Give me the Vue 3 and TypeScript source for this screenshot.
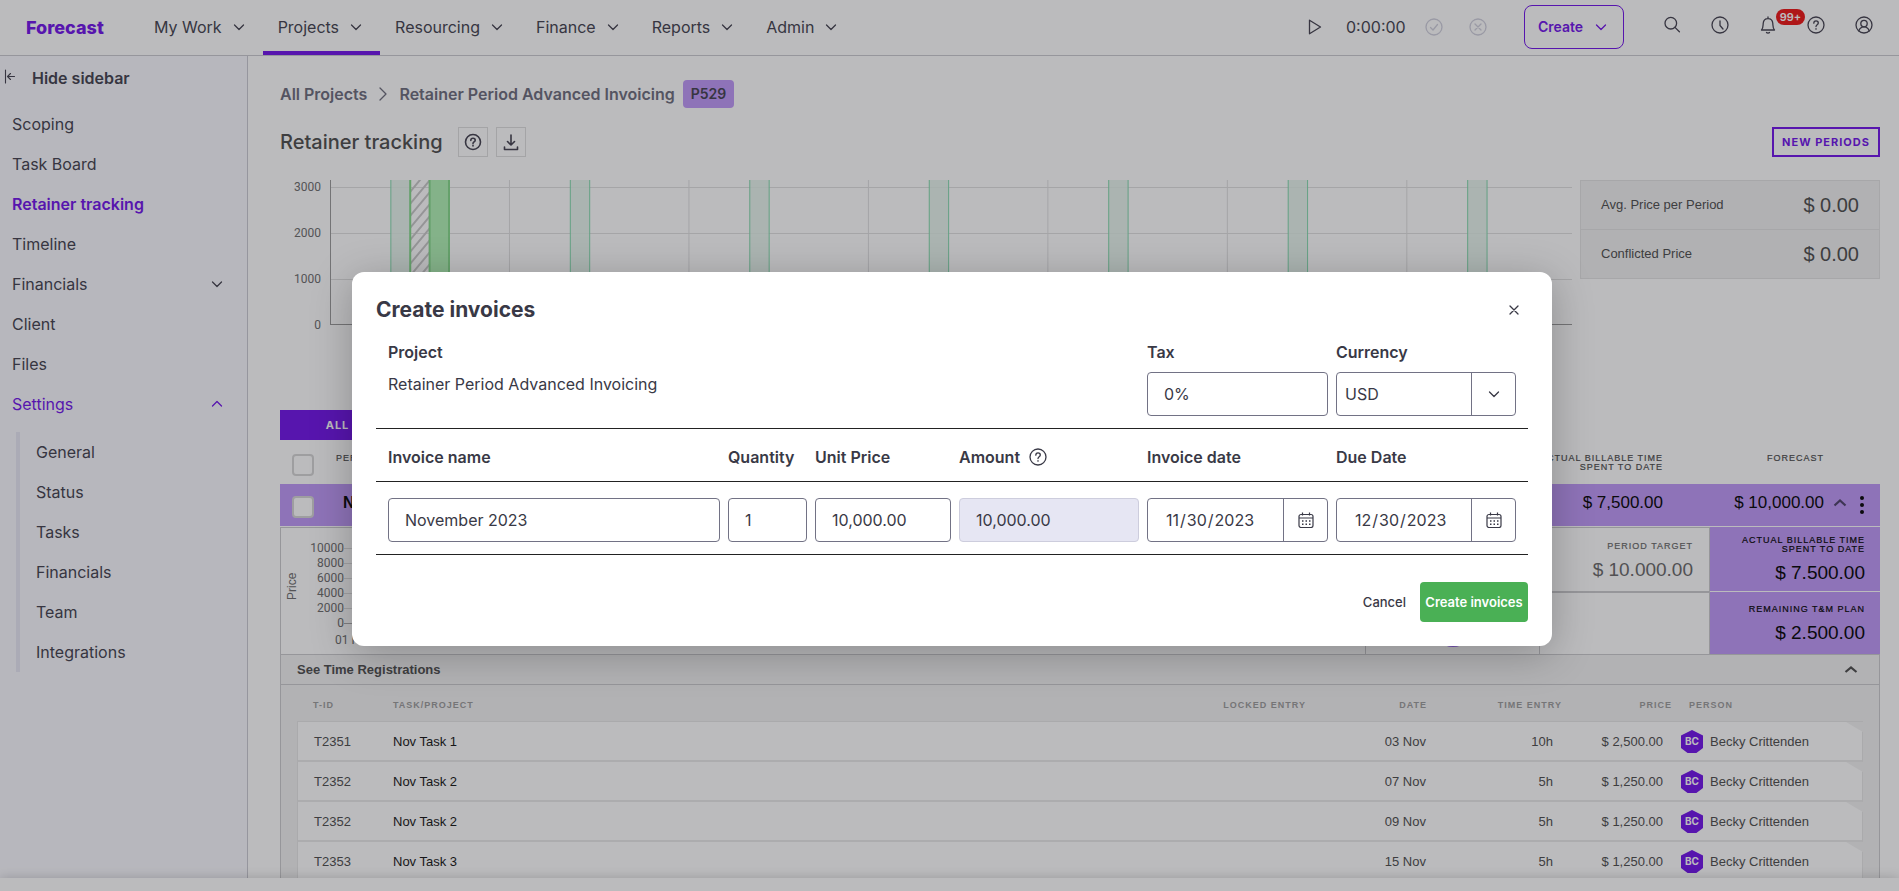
<script setup lang="ts">
import { ref } from 'vue'

interface SideItem {
  label: string
  active?: boolean
  chevron?: 'up' | 'down'
  open?: boolean
}
interface TimeEntry {
  id: string
  task: string
  date: string
  time: string
  price: string
}

const menu: string[] = ['My Work', 'Projects', 'Resourcing', 'Finance', 'Reports', 'Admin']
const sideItems: SideItem[] = [
  { label: 'Scoping' },
  { label: 'Task Board' },
  { label: 'Retainer tracking', active: true },
  { label: 'Timeline' },
  { label: 'Financials', chevron: 'down' },
  { label: 'Client' },
  { label: 'Files' },
  { label: 'Settings', chevron: 'up', open: true },
]
const subItems: string[] = ['General', 'Status', 'Tasks', 'Financials', 'Team', 'Integrations']

const chartTicks: number[] = [3000, 2000, 1000, 0]
const periodPct = 14.45
const barPct = 1.56
const periods: number[] = [0, 1, 2, 3, 4, 5, 6]
const barX = (n: number): number => 4.9 + n * periodPct
const miniTicks: number[] = [10000, 8000, 6000, 4000, 2000, 0]

const entries: TimeEntry[] = [
  { id: 'T2351', task: 'Nov Task 1', date: '03 Nov', time: '10h', price: '$ 2,500.00' },
  { id: 'T2352', task: 'Nov Task 2', date: '07 Nov', time: '5h', price: '$ 1,250.00' },
  { id: 'T2352', task: 'Nov Task 2', date: '09 Nov', time: '5h', price: '$ 1,250.00' },
  { id: 'T2353', task: 'Nov Task 3', date: '15 Nov', time: '5h', price: '$ 1,250.00' },
]

const tax = ref('0%')
const currency = ref('USD')
const invoiceName = ref('November 2023')
const quantity = ref('1')
const unitPrice = ref('10,000.00')
const amount = ref('10,000.00')
const invoiceDate = ref('2023-11-30')
const dueDate = ref('2023-12-30')
</script>

<template>
  <div class="app">
    <header class="nav">
      <a href="#" class="logo">Forecast</a>
      <nav class="menu">
        <button v-for="m in menu" :key="m" type="button" class="menu-item" :class="{ current: m === 'Projects' }">
          {{ m }}
          <svg width="18" height="18" viewBox="0 0 18 18" class="line"><path d="M4.5 7 9 11.5 13.5 7" /></svg>
        </button>
      </nav>
      <div class="timer">
        <button type="button" class="icon-btn" aria-label="Start timer">
          <svg width="18" height="18" viewBox="0 0 18 18" class="line"><path d="M3.5 2.2V15.8L14.5 9Z" /></svg>
        </button>
        <span class="time">0:00:00</span>
        <button type="button" class="icon-btn faint" aria-label="Confirm">
          <svg width="18" height="18" viewBox="0 0 18 18" class="line"><circle cx="9" cy="9" r="8" /><path d="M5.5 9.5 8 12 12.5 6.5" /></svg>
        </button>
        <button type="button" class="icon-btn faint discard" aria-label="Discard">
          <svg width="18" height="18" viewBox="0 0 18 18" class="line"><circle cx="9" cy="9" r="8" /><path d="M6 6 12 12M12 6 6 12" /></svg>
        </button>
      </div>
      <button type="button" class="create">
        Create
        <svg width="16" height="16" viewBox="0 0 16 16" class="line"><path d="M3.5 6 8 10.5 12.5 6" /></svg>
      </button>
      <div class="tools">
        <button type="button" class="icon-btn" aria-label="Search">
          <svg width="18" height="18" viewBox="0 0 18 18" class="line"><circle cx="7.8" cy="7.2" r="5.8" /><path d="M12 11.4 16.4 15.8" /></svg>
        </button>
        <button type="button" class="icon-btn" aria-label="Time">
          <svg width="18" height="18" viewBox="0 0 18 18" class="line"><circle cx="9" cy="9" r="8" /><path d="M9 5V9.5L12 13" /></svg>
        </button>
        <button type="button" class="icon-btn bell" aria-label="Notifications">
          <svg width="18" height="18" viewBox="0 0 18 18" class="line"><path d="M2.5 14H15.5C13.8 12.4 14 10.5 13.8 7.5C13.6 4.3 11.8 2.6 9 2.6S4.4 4.3 4.2 7.5C4 10.5 4.2 12.4 2.5 14ZM9 2.6V1M7.5 16.5C8.2 17.3 9.8 17.3 10.5 16.5" /></svg>
          <span class="badge">99+</span>
        </button>
        <button type="button" class="icon-btn" aria-label="Help">
          <svg width="18" height="18" viewBox="0 0 18 18" class="line"><circle cx="9" cy="9" r="8" /><path d="M6.8 7.2C6.8 4 11.3 4.2 11.3 7C11.3 8.8 9 8.8 9 10.6M9 12.6V13.2" /></svg>
        </button>
        <button type="button" class="icon-btn" aria-label="Account">
          <svg width="18" height="18" viewBox="0 0 18 18" class="line"><circle cx="9" cy="9" r="8" /><circle cx="9" cy="7.6" r="3.2" /><path d="M3.8 15C4.6 12.3 6.5 10.8 9 10.8S13.4 12.3 14.2 15" /></svg>
        </button>
      </div>
    </header>

    <div class="body">
      <aside class="sidebar">
        <button type="button" class="hide">
          <svg width="16" height="18" viewBox="0 0 16 18" class="line thin"><path d="M1.5 1V14M10.500 7.500H3.500M6.500 4.500 3.500 7.500 6.500 10.500" /></svg>
          Hide sidebar
        </button>
        <ul>
          <li v-for="s in sideItems" :key="s.label">
            <a href="#" class="side-link" :class="{ active: s.active, open: s.open }">
              {{ s.label }}
              <svg v-if="s.chevron === 'down'" width="16" height="16" viewBox="0 0 16 16" class="line"><path d="M3.5 6 8 10.5 12.5 6" /></svg>
              <svg v-if="s.chevron === 'up'" width="16" height="16" viewBox="0 0 16 16" class="line"><path d="M3.5 10 8 5.5 12.5 10" /></svg>
            </a>
          </li>
        </ul>
        <ul class="sub">
          <li v-for="s in subItems" :key="s"><a href="#" class="side-link">{{ s }}</a></li>
        </ul>
      </aside>

      <main class="main">
        <div class="crumbs">
          <a href="#">All Projects</a>
          <svg width="10" height="16" viewBox="0 0 10 16" class="line"><path d="M2 2 8 8 2 14" /></svg>
          <a href="#">Retainer Period Advanced Invoicing</a>
          <span class="tag">P529</span>
        </div>

        <div class="title-row">
          <h1>Retainer tracking</h1>
          <button type="button" class="square" aria-label="Help">
            <svg width="18" height="18" viewBox="0 0 18 18" class="line bold"><circle cx="9" cy="9" r="7.5" /><path d="M6.8 7.4C6.8 4.4 11.2 4.6 11.2 7.2C11.2 8.8 9 8.9 9 10.4M9 12.2V13" /></svg>
          </button>
          <button type="button" class="square" aria-label="Download">
            <svg width="18" height="18" viewBox="0 0 18 18" class="line bold"><path d="M9 2V11.5M5.500 8.500 9 12 12.500 8.500M2.500 14V16.500H15.500V14" /></svg>
          </button>
          <button type="button" class="new-periods">NEW PERIODS</button>
        </div>

        <section class="overview">
          <div class="ticks"><span v-for="t in chartTicks" :key="t">{{ t }}</span></div>
          <svg class="plot" height="146">
            <defs>
              <pattern id="hatch" width="10" height="12" patternUnits="userSpaceOnUse">
                <path d="M-2 14.4 12 -2.4M-2 2.4 2 -2.4M8 14.4 12 9.6" stroke="#c8c8c8" stroke-width="2" />
              </pattern>
            </defs>
            <g class="grid-lines">
              <line v-for="y in [7, 53, 99]" :key="y" x1="0" x2="100%" :y1="y + 0.5" :y2="y + 0.5" />
              <line v-for="n in 6" :key="'v' + n" :x1="n * periodPct + '%'" :x2="n * periodPct + '%'" y1="0" y2="144" />
            </g>
            <g v-for="n in periods" :key="'b' + n" class="bar">
              <rect :x="barX(n) + '%'" y="0" :width="barPct + '%'" height="144" />
              <line :x1="barX(n) + '%'" :x2="barX(n) + '%'" y1="0" y2="144" />
              <line :x1="barX(n) + barPct + '%'" :x2="barX(n) + barPct + '%'" y1="0" y2="144" />
            </g>
            <rect :x="barX(0) + barPct + '%'" y="0" :width="barPct + '%'" height="144" fill="url(#hatch)" />
            <g class="bar strong">
              <rect :x="barX(0) + 2 * barPct + '%'" y="0" :width="barPct + '%'" height="144" />
              <line :x1="barX(0) + barPct + '%'" :x2="barX(0) + barPct + '%'" y1="0" y2="144" />
              <line :x1="barX(0) + 2 * barPct + '%'" :x2="barX(0) + 2 * barPct + '%'" y1="0" y2="144" />
              <line :x1="barX(0) + 3 * barPct + '%'" :x2="barX(0) + 3 * barPct + '%'" y1="0" y2="144" />
            </g>
            <g class="axis">
              <line x1="0.5" x2="0.5" y1="0" y2="145" />
              <line x1="0" x2="100%" y1="144.5" y2="144.5" />
            </g>
          </svg>
          <dl class="totals">
            <div><dt>Avg. Price per Period</dt><dd>$ 0.00</dd></div>
            <div><dt>Conflicted Price</dt><dd>$ 0.00</dd></div>
          </dl>
        </section>

        <div class="tabs"><button type="button">ALL</button></div>

        <div class="period-head">
          <input type="checkbox" class="check" aria-label="Select all periods" />
          <span class="caps p-name">PERIOD</span>
          <span class="caps p-actual">ACTUAL BILLABLE TIME SPENT TO DATE</span>
          <span class="caps p-forecast">FORECAST</span>
        </div>
        <div class="period-row">
          <input type="checkbox" class="check" aria-label="Select period" />
          <strong class="p-name">November 2023</strong>
          <span class="p-actual">$ 7,500.00</span>
          <span class="p-forecast">$ 10,000.00</span>
          <button type="button" class="icon-btn up" aria-label="Collapse period">
            <svg width="16" height="16" viewBox="0 0 16 16" class="line heavy"><path d="M2.5 10.5 8 5.5 13.5 10.5" /></svg>
          </button>
          <button type="button" class="icon-btn kebab" aria-label="Period options">
            <svg width="6" height="20" viewBox="0 0 6 20"><circle cx="3" cy="3" r="2" /><circle cx="3" cy="10" r="2" /><circle cx="3" cy="17" r="2" /></svg>
          </button>
        </div>

        <section class="detail">
          <div class="mini">
            <span class="mini-title">Price</span>
            <div class="mini-labels">
              <span v-for="t in miniTicks" :key="t">{{ t }}</span>
              <span class="mini-date">01 Nov</span>
            </div>
            <div class="mini-lines"><i v-for="t in miniTicks" :key="t"></i></div>
          </div>
          <div class="cell people">
            <svg width="40" height="40" viewBox="0 0 40 40"><circle cx="20" cy="20" r="20" /></svg>
          </div>
          <div class="stack">
            <div class="stat"><span class="caps">PERIOD TARGET</span><b>$ 10.000.00</b></div>
            <div class="stat"></div>
          </div>
          <div class="stack violet">
            <div class="stat"><span class="caps">ACTUAL BILLABLE TIME<br />SPENT TO DATE</span><b>$ 7.500.00</b></div>
            <div class="stat"><span class="caps">REMAINING T&amp;M PLAN</span><b>$ 2.500.00</b></div>
          </div>
        </section>

        <section class="registrations">
          <button type="button" class="reg-head">
            See Time Registrations
            <svg width="16" height="16" viewBox="0 0 16 16" class="line heavy"><path d="M2.5 10 8 5.5 13.5 10" /></svg>
          </button>
          <div class="reg-body">
            <table>
              <colgroup>
                <col class="c-id" /><col /><col class="c-locked" /><col class="c-date" /><col class="c-time" /><col class="c-price" /><col class="c-person" />
              </colgroup>
              <thead>
                <tr>
                  <th class="first">T-ID</th>
                  <th>TASK/PROJECT</th>
                  <th class="r">LOCKED ENTRY</th>
                  <th class="r">DATE</th>
                  <th class="r">TIME ENTRY</th>
                  <th class="r">PRICE</th>
                  <th class="person-head">PERSON</th>
                </tr>
              </thead>
              <tbody>
                <tr v-for="(e, i) in entries" :key="i">
                  <td class="first">{{ e.id }}</td>
                  <td class="task">{{ e.task }}</td>
                  <td></td>
                  <td class="r date">{{ e.date }}</td>
                  <td class="r num">{{ e.time }}</td>
                  <td class="r num">{{ e.price }}</td>
                  <td class="last">
                    <div class="person">
                      <span class="hex">BC</span>
                      Becky Crittenden
                    </div>
                  </td>
                </tr>
              </tbody>
            </table>
          </div>
        </section>
      </main>
    </div>

    <div class="bottom"></div>

    <div class="overlay">
      <form class="modal" role="dialog" aria-labelledby="dialog-title" @submit.prevent>
        <div class="modal-head">
          <h2 id="dialog-title">Create invoices</h2>
          <button type="button" class="icon-btn" aria-label="Close">
            <svg width="12" height="12" viewBox="0 0 12 12" class="line"><path d="M2 2 10 10M10 2 2 10" /></svg>
          </button>
        </div>

        <div class="cols top">
          <div class="project">
            <span class="label">Project</span>
            <p>Retainer Period Advanced Invoicing</p>
          </div>
          <div>
            <label class="label" for="tax">Tax</label>
            <input id="tax" v-model="tax" type="text" class="box" />
          </div>
          <div>
            <label class="label" for="currency">Currency</label>
            <div class="split">
              <select id="currency" v-model="currency"><option>USD</option></select>
              <span class="side">
                <svg width="16" height="16" viewBox="0 0 16 16" class="line"><path d="M3.5 6 8 10.5 12.5 6" /></svg>
              </span>
            </div>
          </div>
        </div>

        <div class="cols heads">
          <label for="inv-name">Invoice name</label>
          <label for="inv-qty">Quantity</label>
          <label for="inv-unit">Unit Price</label>
          <label for="inv-amount" class="with-icon">
            Amount
            <svg width="18" height="18" viewBox="0 0 18 18" class="line"><circle cx="9" cy="9" r="8" /><path d="M6.8 7.2C6.8 4 11.3 4.2 11.3 7C11.3 8.8 9 8.8 9 10.6M9 12.6V13.2" /></svg>
          </label>
          <label for="inv-date">Invoice date</label>
          <label for="inv-due">Due Date</label>
        </div>

        <div class="cols row">
          <input id="inv-name" v-model="invoiceName" type="text" class="box" />
          <input id="inv-qty" v-model="quantity" type="text" class="box" />
          <input id="inv-unit" v-model="unitPrice" type="text" class="box" />
          <input id="inv-amount" v-model="amount" type="text" class="box" disabled />
          <div class="split">
            <input id="inv-date" v-model="invoiceDate" type="date" />
            <button type="button" class="side" aria-label="Pick invoice date">
              <svg width="16" height="16" viewBox="0 0 16 16" class="cal"><rect x="1" y="2.5" width="14" height="13" rx="2" /><path d="M1 6H15M4.5 .5V3.5M11.5 .5V3.5" /><path class="dots" d="M4 9H12.5M4 12.3H12.5" /></svg>
            </button>
          </div>
          <div class="split">
            <input id="inv-due" v-model="dueDate" type="date" />
            <button type="button" class="side" aria-label="Pick due date">
              <svg width="16" height="16" viewBox="0 0 16 16" class="cal"><rect x="1" y="2.5" width="14" height="13" rx="2" /><path d="M1 6H15M4.5 .5V3.5M11.5 .5V3.5" /><path class="dots" d="M4 9H12.5M4 12.3H12.5" /></svg>
            </button>
          </div>
        </div>

        <div class="actions">
          <button type="button" class="cancel">Cancel</button>
          <button type="submit" class="submit">Create invoices</button>
        </div>
      </form>
    </div>
  </div>
</template>

<style>
body {
  margin: 0;
  overflow: hidden;
}
</style>

<style scoped>
* {
  box-sizing: border-box;
}
.app {
  --violet: #6e0fea;
  --lilac: #be97f8;
  --ink: #403e4c;
  --body-font: Inter, sans-serif;
  --data-font: "Liberation Sans", Arial, sans-serif;
  position: relative;
  display: flex;
  flex-direction: column;
  height: 100vh;
  overflow: hidden;
  background: #fff;
  color: var(--ink);
  font: 16px/20px var(--body-font);
}
button {
  padding: 0;
  border: 0;
  background: none;
  color: inherit;
  font: inherit;
  cursor: pointer;
}
a {
  color: inherit;
  text-decoration: none;
}
ul {
  margin: 0;
  padding: 0;
  list-style: none;
}
svg {
  display: block;
  flex: none;
}
.line {
  fill: none;
  stroke: currentColor;
  stroke-width: 1.3;
  stroke-linecap: round;
  stroke-linejoin: round;
}
.line.thin {
  stroke-width: 1.1;
}
.line.bold {
  stroke-width: 1.6;
}
.line.heavy {
  stroke-width: 2.2;
  stroke-linecap: butt;
  stroke-linejoin: miter;
}
.icon-btn {
  display: flex;
}

/* Top navigation */
.nav {
  display: flex;
  flex: none;
  align-items: center;
  height: 56px;
  padding: 0 26px;
  border-bottom: 1px solid #cacad0;
}
.logo {
  width: 113px;
  color: var(--violet);
  font-weight: 800;
  font-size: 18px;
}
.menu {
  display: flex;
  flex: 1;
  align-self: stretch;
}
.menu-item {
  display: flex;
  align-items: center;
  gap: 8px;
  padding: 0 15px 2px;
  border-top: 4px solid transparent;
  border-bottom: 4px solid transparent;
}
.menu-item.current {
  border-bottom-color: var(--violet);
}
.timer {
  display: flex;
  align-items: center;
  padding-bottom: 2px;
}
.time {
  width: 79px;
  margin-left: 22px;
}
.faint {
  color: #cfcfdc;
}
.discard {
  margin-left: 26px;
}
.create {
  display: flex;
  align-items: center;
  justify-content: space-between;
  width: 100px;
  height: 44px;
  margin: 0 39px 2px 37px;
  padding: 0 14px 0 13px;
  border: 1px solid var(--violet);
  border-radius: 8px;
  color: var(--violet);
  font-weight: 600;
  font-size: 14px;
}
.tools {
  display: flex;
  gap: 30px;
  padding-bottom: 6px;
}
.bell {
  position: relative;
}
.badge {
  position: absolute;
  top: -7px;
  left: 17px;
  width: 29px;
  border-radius: 8px;
  background: #ee1111;
  color: #fff;
  font: 600 11px/16px var(--body-font);
  text-align: center;
}

/* Sidebar */
.body {
  display: flex;
  flex: 1;
  min-height: 0;
}
.sidebar {
  flex: none;
  width: 248px;
  border-right: 1px solid #cacad2;
  background: #fafaff;
}
.hide {
  display: flex;
  align-items: center;
  gap: 12px;
  height: 44px;
  margin-bottom: 4px;
  padding-left: 4px;
  font-weight: 600;
}
.side-link {
  display: flex;
  align-items: center;
  justify-content: space-between;
  height: 40px;
  padding: 0 22px 0 12px;
}
.side-link.active {
  color: var(--violet);
  font-weight: 600;
}
.side-link.open {
  color: var(--violet);
}
.sub {
  margin: 8px 0 0 16px;
  border-left: 4px solid #e8e8f5;
}
.sub .side-link {
  padding-left: 16px;
}

/* Main column */
.main {
  display: flex;
  flex: 1;
  flex-direction: column;
  min-width: 0;
  padding: 24px 19px 0 32px;
  overflow: hidden;
}
.main > * {
  flex: none;
}
.crumbs {
  display: flex;
  align-items: center;
  height: 28px;
  color: #6b6a7a;
  font-weight: 600;
}
.crumbs svg {
  margin: 0 11px;
}
.tag {
  margin-left: 8px;
  padding: 0 8px;
  border-radius: 4px;
  background: var(--lilac);
  color: var(--ink);
  font: 600 14px/28px var(--body-font);
}
.title-row {
  display: flex;
  align-items: center;
  gap: 8px;
  height: 30px;
  margin: 19px 0 23px;
}
h1 {
  margin: 0 7px 0 0;
  color: #4b4b4b;
  font: 500 20px/28px var(--body-font);
}
.square {
  display: flex;
  align-items: center;
  justify-content: center;
  width: 30px;
  height: 30px;
  border: 1px solid #dedede;
}
.new-periods {
  width: 108px;
  height: 30px;
  margin-left: auto;
  border: 2px solid var(--violet);
  color: var(--violet);
  font: 700 11px/26px var(--body-font);
  letter-spacing: 1px;
}
.overview {
  display: flex;
  height: 230px;
}
.ticks {
  width: 41px;
  margin: -16px 9px 0 0;
  color: #6a6a6a;
  font: 12px/46px Roboto, sans-serif;
  text-align: right;
}
.ticks span {
  display: block;
}
.plot {
  flex: 1;
  min-width: 0;
}
.grid-lines line {
  stroke: #dfdfe0;
}
.axis line {
  stroke: #999;
}
.bar rect {
  fill: #e2f3ea;
  fill-opacity: .8;
}
.bar line {
  stroke: #7fd9ab;
}
.bar.strong rect {
  fill: #b0f2b4;
  fill-opacity: 1;
}
.bar.strong line {
  stroke: #83d989;
  stroke-width: 2;
}
.totals {
  width: 300px;
  height: 99px;
  margin: 0 0 0 8px;
  border: 1px solid #e2e2e2;
  background: #f1f1f1;
  color: #4a4a4a;
  font: 13px/48px var(--data-font);
}
.totals div {
  display: flex;
  justify-content: space-between;
  padding: 0 20px;
}
.totals div + div {
  border-top: 1px solid #e2e2e2;
}
.totals dd {
  margin: 0;
  font-size: 20px;
}

/* Period list */
.tabs {
  display: flex;
}
.tabs button {
  width: 115px;
  height: 30px;
  background: var(--violet);
  color: #fff;
  font: 700 11px/30px var(--body-font);
  letter-spacing: 1px;
}
.caps {
  font: 9px/9px var(--data-font);
  letter-spacing: 1px;
  -webkit-text-stroke: .2px currentColor;
}
.period-head,
.period-row {
  display: flex;
  padding: 0 11px 0 12px;
  font-family: var(--data-font);
}
.period-head {
  height: 44px;
  padding-top: 14px;
  color: #4a4a4a;
}
.period-row {
  align-items: center;
  height: 42px;
  margin-bottom: 1px;
  background: var(--lilac);
  color: #000;
  font-size: 17px;
}
.check {
  width: 22px;
  height: 22px;
  margin: 0;
  border: 2px solid #d6d6d6;
  border-radius: 4px;
  background: #fff;
  appearance: none;
}
.period-row .check {
  margin-top: 4px;
}
.p-name {
  flex: 1;
  padding-left: 22px;
}
.period-row .p-name {
  padding: 0 0 4px 29px;
  font-size: 16px;
}
.p-actual {
  width: 136px;
  text-align: right;
}
.p-forecast {
  width: 161px;
  text-align: right;
}
.period-head .p-forecast {
  margin-right: 45px;
}
.period-row .p-actual,
.period-row .p-forecast {
  padding-bottom: 5px;
}
.up {
  margin: 0 11px 4px 8px;
  color: #4a3d68;
}
.kebab {
  width: 10px;
}
.detail {
  display: grid;
  grid-template-columns: 1fr 174px 171px 170px;
  height: 128px;
  border-bottom: 1px solid #cacacc;
}
.mini {
  display: flex;
  border: solid #cacacc;
  border-width: 1px 0 0 1px;
  color: #6a6a6a;
  font: 12px/15px Roboto, sans-serif;
}
.mini-title {
  height: 88px;
  margin-left: 2px;
  font: 12px/18px var(--data-font);
  text-align: center;
  writing-mode: vertical-rl;
  transform: rotate(180deg);
  align-self: flex-start;
  margin-top: 14px;
}
.mini-labels {
  display: flex;
  flex-direction: column;
  width: 43px;
  padding-top: 13px;
  text-align: right;
}
.mini-date {
  margin: 2px 0 0 34px;
  text-align: left;
  white-space: nowrap;
}
.mini-lines {
  flex: 1;
  padding-top: 6px;
}
.mini-lines i {
  display: block;
  height: 15px;
  border-bottom: 1px solid #dcdcdc;
}
.mini-lines i:last-child {
  border-color: #aaa;
}
.cell {
  border: solid #cacacc;
  border-width: 1px 0 0 1px;
}
.people {
  display: flex;
  align-items: flex-end;
  justify-content: center;
  padding-bottom: 7px;
  fill: #9a66f0;
}
.stack {
  display: grid;
  grid-template-rows: 1fr 1fr;
  border: solid #cacacc;
  border-width: 1px 1px 0 1px;
  color: #666;
  text-align: right;
}
.stack .stat {
  display: flex;
  flex-direction: column;
  justify-content: center;
  gap: 9px;
  padding: 2px 16px 0 0;
}
.stack .stat + .stat {
  border-top: 2px solid #cacacc;
}
.stack b {
  font: 19px/20px var(--data-font);
}
.stack.violet {
  border: 0;
  background: var(--lilac);
  color: #000;
}
.stack.violet .stat {
  padding-right: 15px;
}
.stack.violet .stat + .stat {
  border-top: 1px solid #fff;
}

/* Time registrations */
.registrations {
  border: solid #cacacc;
  border-width: 0 1px;
  background: #f2f2f2;
}
.reg-head {
  display: flex;
  align-items: center;
  justify-content: space-between;
  width: 100%;
  height: 30px;
  padding: 1px 20px 0 16px;
  border-bottom: 1px solid #cacacc;
  color: #4a4a4a;
  font: 700 13px/20px var(--data-font);
}
.reg-body {
  padding: 0 16px;
}
table {
  width: 100%;
  border-spacing: 0;
  table-layout: fixed;
  color: #4a4a4a;
  font: 13px/20px var(--data-font);
}
.c-id {
  width: 96px;
}
.c-locked {
  width: 140px;
}
.c-date {
  width: 121px;
}
.c-time {
  width: 135px;
}
.c-price {
  width: 110px;
}
.c-person {
  width: 191px;
}
th {
  height: 37px;
  padding: 3px 0 0;
  border-bottom: 1px solid #e6e6e6;
  color: #9a9a9a;
  font: 700 9px/12px var(--data-font);
  letter-spacing: 1px;
  text-align: left;
}
td {
  height: 40px;
  padding: 1px 0 0;
  border-bottom: 2px solid #e9e9e9;
  background: #fff;
}
.first {
  padding-left: 16px;
}
td.first {
  border-left: 1px solid #e6e6e6;
}
.task {
  color: #111;
}
.r {
  text-align: right;
}
.date {
  padding-right: 1px;
}
.num {
  padding-right: 9px;
}
.person-head {
  padding-left: 17px;
}
.last {
  border-right: 1px solid #e6e6e6;
  clip-path: polygon(0 0, calc(100% - 17px) 0, 100% 10px, 100% 100%, 0 100%);
}
.person {
  display: flex;
  align-items: center;
  gap: 7px;
  padding-left: 9px;
}
.hex {
  width: 22px;
  background: var(--violet);
  color: #fff;
  clip-path: polygon(50% 0, 100% 24%, 100% 78%, 70% 100%, 30% 100%, 0 78%, 0 24%);
  font: 700 10px/23px var(--body-font);
  text-align: center;
}
.bottom {
  position: relative;
  flex: none;
  height: 13px;
  background: #fff;
  box-shadow: 0 0 12px rgba(0, 0, 0, .2);
}

/* Dialog */
.overlay {
  position: absolute;
  inset: 0;
  display: flex;
  align-items: flex-start;
  justify-content: center;
  padding: 272px 0 0 5px;
  background: rgba(36, 36, 42, .31);
}
.modal {
  width: 1200px;
  max-width: 96%;
  padding: 24px;
  border-radius: 12px;
  background: #fff;
  box-shadow: 0 8px 40px rgba(0, 0, 0, .25);
  color: #393946;
}
.modal-head {
  display: flex;
  align-items: center;
  justify-content: space-between;
  height: 28px;
  padding-right: 8px;
}
h2 {
  margin: 0;
  font: 700 21px/28px var(--body-font);
}
.cols {
  display: grid;
  grid-template-columns: 332fr 79fr 136fr 180fr 181fr 180fr;
  gap: 8px;
  padding: 0 12px;
  border-bottom: 1px solid #222;
}
.top {
  padding-top: 18px;
  padding-bottom: 12px;
}
.project {
  grid-column: span 4;
}
.project p {
  margin: 12px 0 0;
}
.label {
  display: block;
  margin-bottom: 10px;
}
.label,
.heads label {
  font-weight: 600;
  line-height: 20px;
  white-space: nowrap;
}
.heads {
  align-items: center;
  height: 53px;
  padding-top: 4px;
}
.with-icon {
  display: flex;
  align-items: center;
  gap: 9px;
}
.row {
  padding-top: 16px;
  padding-bottom: 12px;
}
.box,
.split {
  width: 100%;
  min-width: 0;
  height: 44px;
  border: 1px solid #727285;
  border-radius: 4px;
  background: #fff;
}
.box {
  padding: 0 16px;
}
.box,
.split input,
.split select {
  color: #393946;
  font: 16px/20px var(--body-font);
  outline: none;
}
.box:disabled {
  border: 1px solid #cdcddd;
  background: #e6e6f3;
}
.split {
  display: grid;
  grid-template-columns: 1fr 44px;
}
.split input,
.split select {
  width: 100%;
  min-width: 0;
  height: 42px;
  padding: 0 0 0 17px;
  border: 0;
  background: none;
  appearance: none;
}
.split select {
  padding-left: 8px;
}
.split input::-webkit-calendar-picker-indicator {
  display: none;
}
.side {
  display: flex;
  align-items: center;
  justify-content: center;
  border-left: 1px solid #727285;
}
.cal {
  fill: none;
  stroke: #393946;
  stroke-width: 1.2;
}
.cal .dots {
  stroke-width: 1.5;
  stroke-dasharray: 1.5 2;
}
.actions {
  display: flex;
  justify-content: flex-end;
  gap: 14px;
  margin-top: 27px;
  font: 500 13px/40px var(--body-font);
}
.submit {
  width: 108px;
  height: 40px;
  border-radius: 4px;
  background: #4ab055;
  color: #fff;
  font-weight: 600;
}
</style>
